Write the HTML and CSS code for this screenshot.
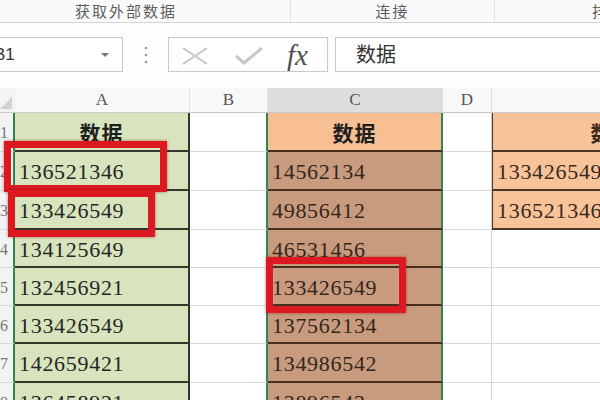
FILE: index.html
```
<!DOCTYPE html>
<html>
<head>
    <title>数据对比</title>
    <link rel="stylesheet" href="styles.css">
</head>
<body>

<div class="page">
    <div class="ribbon">
        <div class="group g1">获取外部数据</div>
        <div class="group g2">连接</div>
        <div class="group g3">排序和筛选</div>
    </div>

    <div class="formula-bar">
        <div class="name-box"><span>B1</span><i class="arrow"></i></div>
        <svg class="dots" width="6" height="18" viewBox="0 0 6 18">
            <circle cx="3" cy="2" r="1.3" fill="#9a9a9a"/>
            <circle cx="3" cy="9" r="1.3" fill="#9a9a9a"/>
            <circle cx="3" cy="16" r="1.3" fill="#9a9a9a"/>
        </svg>
        <div class="fx-box">
            <svg class="cancel" width="26" height="18" viewBox="0 0 26 18">
                <path d="M1 1 L25 17 M25 1 L1 17" stroke="#c6c6c6" stroke-width="2" fill="none"/>
            </svg>
            <svg class="enter" width="28" height="18" viewBox="0 0 28 18">
                <path d="M1 9 L9 16 L27 1" stroke="#c6c6c6" stroke-width="3" fill="none"/>
            </svg>
            <span class="fx">fx</span>
        </div>
        <div class="formula">数据</div>
    </div>

    <div class="sheet">
        <!-- column headers -->
        <div class="corner"><i></i></div>
        <div class="ch">A</div>
        <div class="ch">B</div>
        <div class="ch sel">C</div>
        <div class="ch">D</div>
        <div class="ch">E</div>

        <div class="rh">1</div>
        <div class="ca hd">数据</div>
        <div class="cb"></div>
        <div class="cc hd">数据</div>
        <div class="cd"></div>
        <div class="ce fill hd">数据</div>

        <div class="rh">2</div>
        <div class="ca">136521346</div>
        <div class="cb"></div>
        <div class="cc">14562134</div>
        <div class="cd"></div>
        <div class="ce fill">133426549</div>

        <div class="rh">3</div>
        <div class="ca">133426549</div>
        <div class="cb"></div>
        <div class="cc">49856412</div>
        <div class="cd"></div>
        <div class="ce fill">136521346</div>

        <div class="rh">4</div>
        <div class="ca">134125649</div>
        <div class="cb"></div>
        <div class="cc">46531456</div>
        <div class="cd"></div>
        <div class="ce"></div>

        <div class="rh">5</div>
        <div class="ca">132456921</div>
        <div class="cb"></div>
        <div class="cc">133426549</div>
        <div class="cd"></div>
        <div class="ce"></div>

        <div class="rh">6</div>
        <div class="ca">133426549</div>
        <div class="cb"></div>
        <div class="cc">137562134</div>
        <div class="cd"></div>
        <div class="ce"></div>

        <div class="rh">7</div>
        <div class="ca">142659421</div>
        <div class="cb"></div>
        <div class="cc">134986542</div>
        <div class="cd"></div>
        <div class="ce"></div>

        <div class="rh">8</div>
        <div class="ca">136458921</div>
        <div class="cb"></div>
        <div class="cc">13896543</div>
        <div class="cd"></div>
        <div class="ce"></div>
    </div>

    <!-- red highlight boxes drawn over the cells -->
    <div class="mark m1"></div>
    <div class="mark m2"></div>
    <div class="mark m3"></div>
</div>

</body>
</html>
```

FILE: styles.css
```
body {
    margin: 0;
    background-color: #fff;
    overflow: hidden;
}

.page {
    position: relative;
    width: 600px;
    height: 400px;
    overflow: hidden;
    font-family: "Liberation Sans", "Noto Sans CJK SC", sans-serif;
}

/* ribbon group labels */
.ribbon {
    display: flex;
    height: 22px;
    background-color: #fafafa;
    border-bottom: 1px solid #d4d4d4;
    font-family: "Noto Sans CJK SC", sans-serif;
    font-size: 15px;
    color: #5e5e5e;
    line-height: 22px;
}

.group {
    flex: none;
    text-align: center;
    letter-spacing: 2px;
}

.g1 {
    width: 290px;
    padding-left: 75px;
    box-sizing: border-box;
    text-align: left;
}

.g2 {
    width: 203px;
    border-left: 1px solid #e2e2e2;
}

.g3 {
    width: 200px;
    border-left: 1px solid #e2e2e2;
    text-align: left;
    padding-left: 97px;
}

/* formula bar */
.formula-bar {
    display: flex;
    align-items: center;
    height: 65px;
    background-color: #fdfdfd;
}

.name-box {
    display: flex;
    align-items: center;
    box-sizing: border-box;
    width: 143px;
    height: 35px;
    margin-left: -20px;
    margin-top: -2px;
    padding-left: 13px;
    background-color: #fff;
    border: 1px solid #c9c9c9;
    font-size: 17px;
    color: #333;
}

.name-box span {
    flex: 1;
}

.arrow {
    width: 0;
    height: 0;
    margin-right: 13px;
    border-left: 4px solid transparent;
    border-right: 4px solid transparent;
    border-top: 4px solid #777;
}

.dots {
    margin-left: 20px;
    margin-top: -2px;
}

.fx-box {
    display: flex;
    align-items: center;
    box-sizing: border-box;
    width: 160px;
    height: 35px;
    margin-left: 19px;
    margin-top: -2px;
    background-color: #fff;
    border: 1px solid #c9c9c9;
}

.cancel {
    margin-left: 13px;
    margin-top: 2px;
}

.enter {
    margin-left: 27px;
    margin-top: 2px;
}

.fx {
    margin-left: 24px;
    font-family: "Liberation Serif", serif;
    font-style: italic;
    font-size: 29px;
    color: #505050;
    line-height: 30px;
}

.formula {
    box-sizing: border-box;
    flex: 1;
    height: 35px;
    margin-left: 7px;
    margin-right: -10px;
    margin-top: -2px;
    padding-left: 20px;
    background-color: #fff;
    border: 1px solid #c9c9c9;
    font-family: "Noto Sans CJK SC", sans-serif;
    font-size: 20px;
    line-height: 32px;
    color: #333;
}

/* worksheet grid */
.sheet {
    display: grid;
    grid-template-columns: 15px 175px 78px 175px 49px 240px;
    grid-template-rows: 25px 39px 39px 39px 38px 38px 38px 39px 40px;
    font-family: "Liberation Serif", serif;
}

.sheet > div {
    box-sizing: border-box;
    overflow: hidden;
    white-space: nowrap;
}

.corner {
    position: relative;
    background-color: #f3f3f3;
    border-bottom: 1px solid #c8c8c8;
}

.corner i {
    position: absolute;
    right: 3px;
    bottom: 3px;
    width: 0;
    height: 0;
    border-left: 12px solid transparent;
    border-bottom: 12px solid #d2d2d2;
}

.ch {
    background-color: #f8f8f8;
    border-right: 1px solid #e0e0e0;
    border-bottom: 1px solid #c8c8c8;
    text-align: center;
    font-size: 17px;
    line-height: 24px;
    color: #555;
}

.ch.sel {
    background-color: #dddddd;
}

.rh {
    background-color: #f3f3f3;
    border-right: 2px solid #2c8552;
    border-bottom: 1px solid #d8d8d8;
    padding-right: 10px;
    padding-top: 11px;
    text-align: right;
    font-size: 16px;
    color: #777;
}

.ca, .cc, .ce {
    padding-left: 4px;
    padding-top: 6px;
    font-size: 22px;
    letter-spacing: 0.7px;
    line-height: 28px;
}

.ca {
    background-color: #d8e4bd;
    border-right: 2px solid #34372f;
    border-bottom: 2px solid #34372f;
    color: #262626;
}

.cb {
    border-right: 2px solid #2c8552;
    border-bottom: 1px solid #dadada;
}

.cc {
    background-color: #c99b7e;
    border-right: 2px solid #2c8552;
    border-bottom: 2px solid #45301f;
    color: #35261c;
}

.cd {
    border-right: 1px solid #d4d4d4;
    border-bottom: 1px solid #dadada;
}

.ce {
    border-bottom: 1px solid #dadada;
    color: #3a2a1e;
}

.ce.fill {
    background-color: #f9c39a;
    border-left: 1px solid #4a3526;
    border-bottom: 2px solid #4a3526;
}

.hd {
    padding: 0;
    text-align: center;
    font-family: "Noto Sans CJK SC", sans-serif;
    font-weight: 700;
    font-size: 21px;
    line-height: 38px;
    letter-spacing: 1px;
}

.cc.hd {
    background-color: #f8bf93;
    color: #1e1e1e;
}

.ca.hd {
    color: #1e1e1e;
}

/* red highlight frames */
.mark {
    position: absolute;
    box-sizing: border-box;
    border: 7px solid #dc1820;
    box-shadow: 0 0 3px rgba(120, 0, 0, 0.5);
}

.m1 {
    left: 4px;
    top: 141px;
    width: 163px;
    height: 51px;
}

.m2 {
    left: 8px;
    top: 190px;
    width: 147px;
    height: 47px;
}

.m3 {
    left: 266px;
    top: 257px;
    width: 140px;
    height: 56px;
}
```
